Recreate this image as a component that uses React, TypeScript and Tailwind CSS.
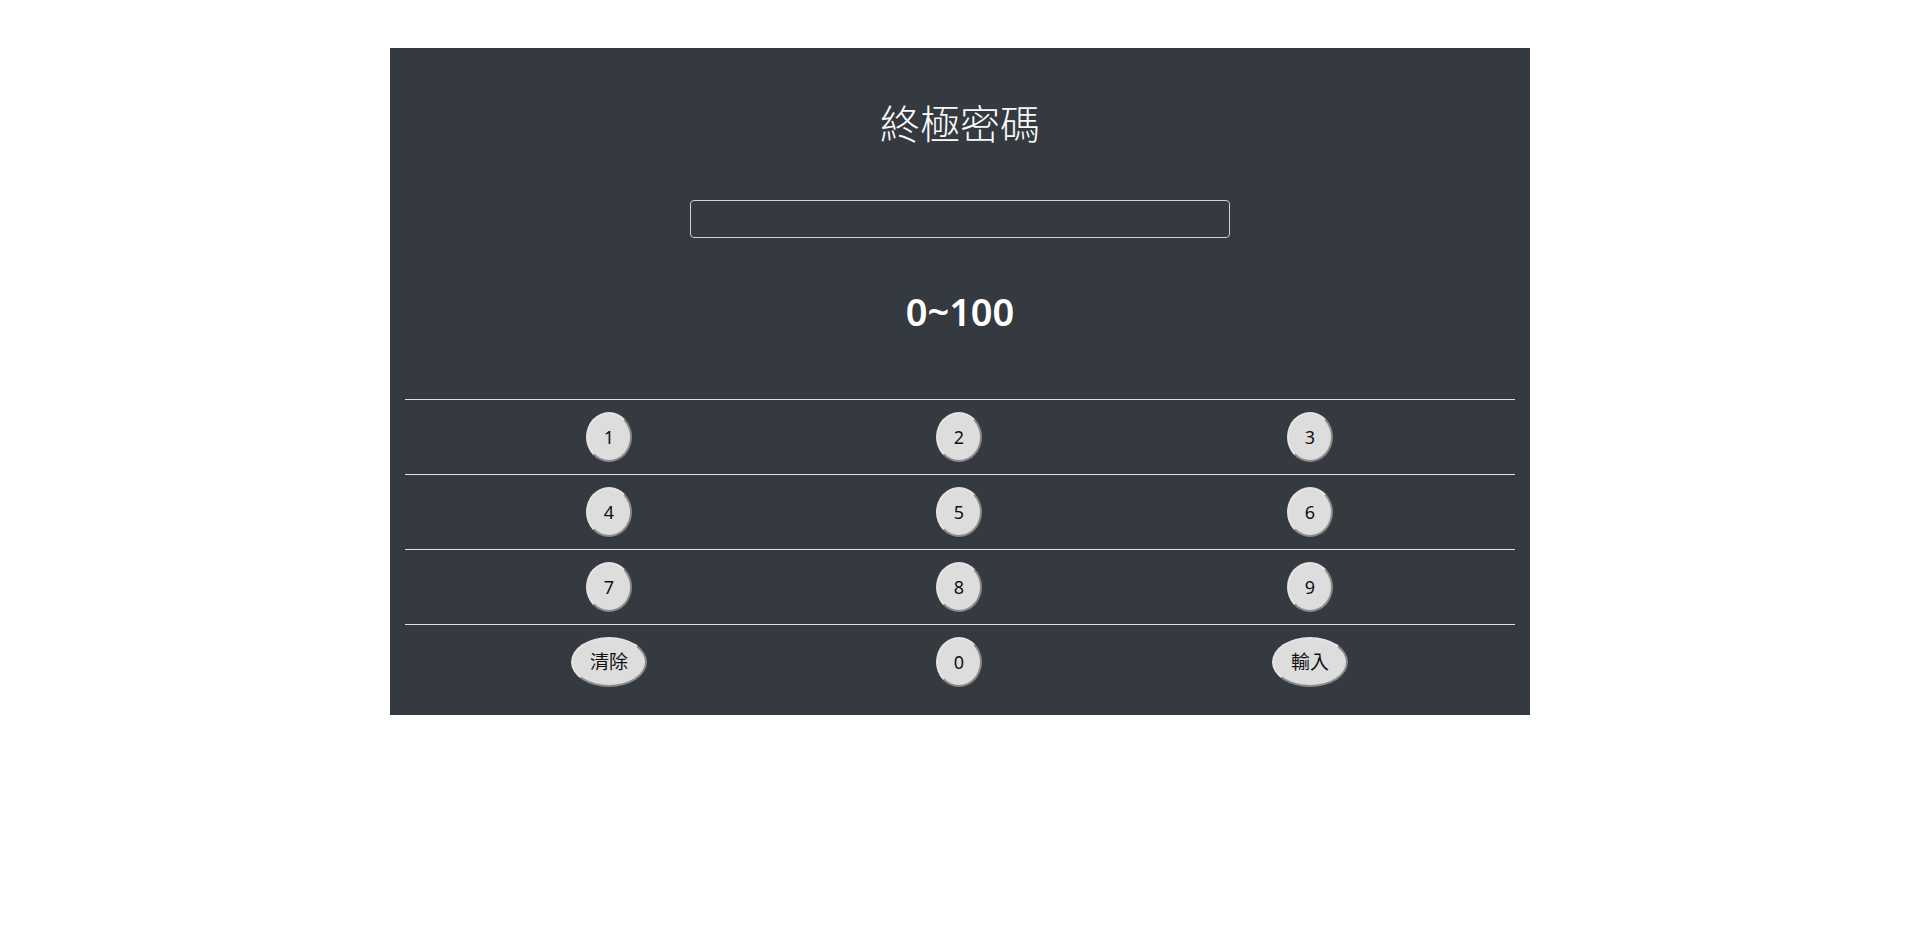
const rows: string[][] = [
  ["1", "2", "3"],
  ["4", "5", "6"],
  ["7", "8", "9"],
  ["清除", "0", "輸入"],
];

const colWidths = ["w-[408px]", "w-[292px]", "w-[410px]"];

const KeyButton = ({ label }: { label: string }) => {
  const wide = label.length > 1;
  return (
    <button
      className={`${wide ? "w-[76px] text-[19px]" : "w-[46px] text-[18px]"} h-[50px] rounded-[50%] bg-[#dddddd] border-2 border-t-[#e4e4e4] border-l-[#e4e4e4] border-r-[#8a8a8a] border-b-[#8a8a8a] leading-none text-[#111] flex items-center justify-center`}
      style={{ fontFamily: '"Noto Sans", "Noto Sans CJK TC", sans-serif' }}
    >
      {label}
    </button>
  );
};

export default function App() {
  return (
    <div className="min-h-screen bg-white pt-12">
      <div className="mx-auto w-[1140px] bg-[#343a40] px-[15px] pb-4">
        <h1
          className="pt-[50px] text-center text-[40px] leading-[48px] font-light text-[#f8f9fa]"
          style={{ fontFamily: '"Noto Sans CJK TC", serif' }}
        >
          終極密碼
        </h1>
        <div className="mt-[54px] flex justify-center">
          <input
            type="text"
            className="w-[540px] h-[38px] rounded border border-[#ced4da] bg-transparent px-3 text-white outline-none"
          />
        </div>
        <h2
          className="mt-[51px] text-center text-[38px] leading-[45px] font-semibold text-white"
          style={{ fontFamily: '"Noto Sans", "Open Sans", sans-serif' }}
        >
          0~100
        </h2>
        <div className="mt-[65px]">
          {rows.map((row, i) => (
            <div key={i} className="flex border-t border-[#dee2e6] py-3">
              {row.map((label, j) => (
                <div key={j} className={`${colWidths[j]} flex justify-center`}>
                  <KeyButton label={label} />
                </div>
              ))}
            </div>
          ))}
        </div>
      </div>
    </div>
  );
}
